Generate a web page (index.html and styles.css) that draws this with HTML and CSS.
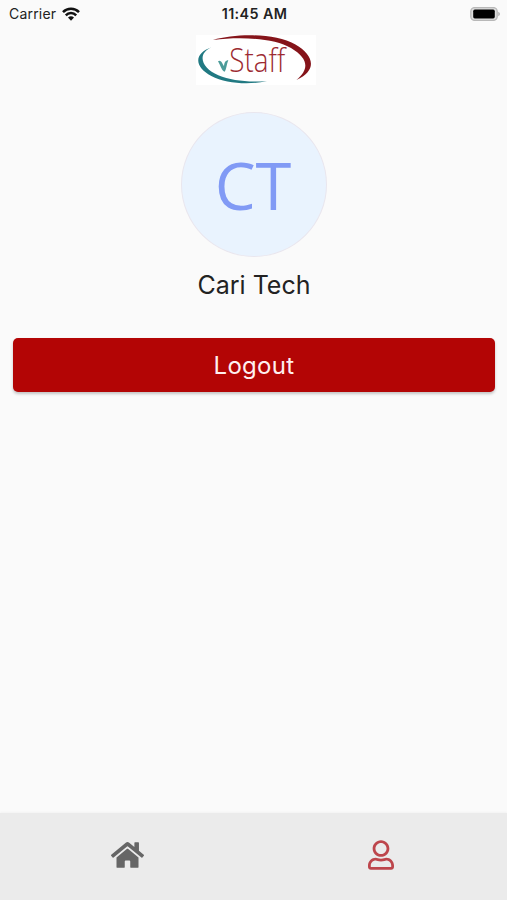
FILE: index.html
```html
<!DOCTYPE html>
<html lang="en">
<head>
    <meta charset="UTF-8">
    <meta name="viewport" content="width=device-width, initial-scale=1.0">
    <title>vStaff</title>
    <link rel="stylesheet" href="styles.css">
</head>
<body>
    <div class="status-bar">
        <div class="carrier">
            <span>Carrier</span>
            <svg class="wifi" viewBox="0 0 18 14">
                <path d="M1 5.2a11.2 11.2 0 0 1 16 0M3.8 8.3a7.2 7.2 0 0 1 10.4 0" fill="none" stroke="#111" stroke-width="2.5"/>
                <path d="M9 13.8l-3-3.2a4.3 4.3 0 0 1 6 0z" fill="#111"/>
            </svg>
        </div>
        <div class="time">11:45 AM</div>
        <div class="battery">
            <svg viewBox="0 0 30 14">
                <rect x="0.8" y="0.6" width="26.4" height="12.8" rx="3.8" fill="#ddd" stroke="#b8b8b8" stroke-width="1.3"/>
                <rect x="3.2" y="2.6" width="21.6" height="8.8" rx="1.6" fill="#000"/>
                <path d="M28.3 4.8q1.6.8 1.6 2.2t-1.6 2.2z" fill="#aaa"/>
            </svg>
        </div>
    </div>

    <header class="header">
        <svg class="logo" viewBox="33 21 360 150">
            <path d="M84 36C155 15 273 16 330 49C389 83 397 127 334 156C375 121 369 91 318 60C268 31 170 25 84 36Z" fill="#85141a"/>
            <path d="M80 58C34 78 50 121 100 142C139 158 191 164 246 159C190 172 122 166 79 144C26 116 27 76 80 58Z" fill="#217982"/>
            <path d="M99 100C107 94 112 106 117 115C118 104 121 97 130 97C125 108 124 126 119 131C111 131 107 113 99 100Z" fill="#4b9b99"/>
            <text class="logo-text" x="133" y="131" textLength="168" lengthAdjust="spacingAndGlyphs">Staff</text>
        </svg>
    </header>

    <main class="profile">
        <div class="avatar">CT</div>
        <h1 class="name">Cari Tech</h1>
        <button class="logout">Logout</button>
    </main>

    <nav class="tab-bar">
        <a class="tab" href="#" aria-label="Home">
            <svg class="icon-home" viewBox="0 0 576 512">
                <path d="M280.37 148.26L96 300.11V464a16 16 0 0 0 16 16l112.06-.29a16 16 0 0 0 15.92-16V368a16 16 0 0 1 16-16h64a16 16 0 0 1 16 16v95.64a16 16 0 0 0 16 16.05L464 480a16 16 0 0 0 16-16V300L295.67 148.26a12.19 12.19 0 0 0-15.3 0zM571.6 251.47L488 182.56V44.05a12 12 0 0 0-12-12h-56a12 12 0 0 0-12 12v72.61L318.47 43a48 48 0 0 0-61 0L4.34 251.47a12 12 0 0 0-1.6 16.9l25.5 31A12 12 0 0 0 45.15 301l235.22-193.74a12.19 12.19 0 0 1 15.3 0L530.9 301a12 12 0 0 0 16.9-1.6l25.5-31a12 12 0 0 0-1.7-16.93z"/>
            </svg>
        </a>
        <a class="tab active" href="#" aria-label="Profile">
            <svg class="icon-user" viewBox="0 0 448 512">
                <path d="M313.6 304c-28.7 0-42.5 16-89.6 16-47.1 0-60.8-16-89.6-16C60.2 304 0 364.2 0 438.4V464c0 26.5 21.5 48 48 48h352c26.5 0 48-21.5 48-48v-25.6c0-74.2-60.2-134.4-134.4-134.4zM400 464H48v-25.6c0-47.6 38.8-86.4 86.4-86.4 14.6 0 38.3 16 89.6 16 51.7 0 74.9-16 89.6-16 47.6 0 86.4 38.8 86.4 86.4V464zM224 288c79.5 0 144-64.5 144-144S303.5 0 224 0 80 64.5 80 144s64.5 144 144 144zm0-240c52.9 0 96 43.1 96 96s-43.1 96-96 96-96-43.1-96-96 43.1-96 96-96z"/>
            </svg>
        </a>
    </nav>
</body>
</html>
```
FILE: styles.css
```css
* {
    margin: 0;
    padding: 0;
    box-sizing: border-box;
}

body {
    height: 100vh;
    display: flex;
    flex-direction: column;
    background-color: #fafafa;
    color: #222;
    font-family: Inter, "Liberation Sans", sans-serif;
    overflow: hidden;
}

svg {
    display: block;
}

/* Status bar */
.status-bar {
    height: 27px;
    padding: 0 7px 0 9px;
    display: grid;
    grid-template-columns: 1fr auto 1fr;
    align-items: center;
    font-size: 14px;
}

.carrier {
    display: flex;
    align-items: center;
    gap: 6px;
    letter-spacing: 0.2px;
}

.wifi {
    width: 18px;
    height: 14px;
}

.time {
    font-size: 14.3px;
    font-weight: 600;
    letter-spacing: 0.4px;
}

.battery {
    justify-self: end;
}

.battery svg {
    width: 30px;
    height: 14px;
}

/* Logo */
.header {
    padding-top: 8px;
    display: flex;
    justify-content: center;
}

.logo {
    width: 120px;
    height: 50px;
    margin-left: 4px;
    background-color: #fff;
}

.logo-text {
    font-family: "Open Sans", sans-serif;
    font-size: 98px;
    font-weight: 300;
    fill: #9c2a31;
}

/* Profile */
.profile {
    flex: 1;
    padding: 27px 12px 0 13px;
    display: flex;
    flex-direction: column;
    align-items: center;
}

.avatar {
    width: 146px;
    height: 145px;
    display: flex;
    justify-content: center;
    align-items: center;
    padding-right: 2px;
    border: 1px solid #e9e6ee;
    border-radius: 50%;
    background-color: #e9f3fe;
    color: #819af5;
    font-family: "Open Sans", sans-serif;
    font-size: 65px;
}

.name {
    margin-top: 12px;
    font-size: 25px;
    font-weight: 400;
    line-height: 32px;
}

.logout {
    width: 100%;
    height: 54px;
    margin-top: 37px;
    border: none;
    border-radius: 5px;
    background-color: #b30505;
    box-shadow: 0 2px 3px rgba(0, 0, 0, 0.22);
    color: #fff0f0;
    font-family: inherit;
    font-size: 24px;
    letter-spacing: 0.3px;
    cursor: pointer;
}

/* Tab bar */
.tab-bar {
    height: 87px;
    display: flex;
    background-color: #ebebeb;
    box-shadow: 0 -1px 2px rgba(0, 0, 0, 0.03);
}

.tab {
    flex: 1;
    display: flex;
    justify-content: center;
    padding: 27px 0 0 1px;
    color: #666;
}

.tab.active {
    color: #bd464c;
}

.tab svg {
    height: 30px;
    fill: currentColor;
}

.icon-home {
    width: 33px;
}

.icon-user {
    width: 26px;
}
```
